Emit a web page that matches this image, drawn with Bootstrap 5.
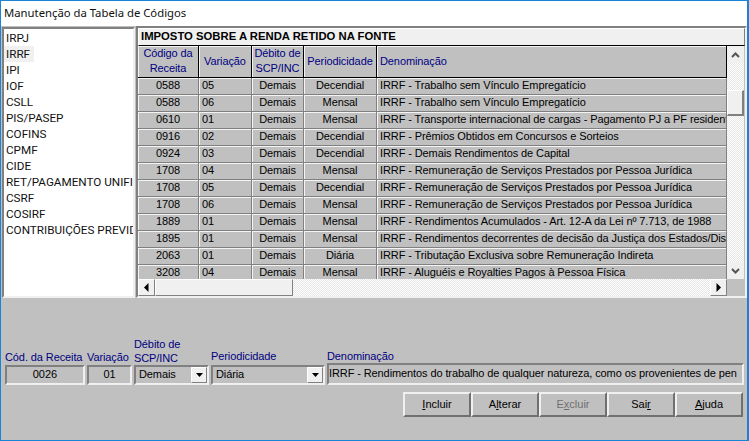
<!DOCTYPE html>
<html lang="pt">
<head>
<meta charset="utf-8">
<title>Manutenção da Tabela de Códigos</title>
<link href="https://cdn.jsdelivr.net/npm/bootstrap@5.3.0/dist/css/bootstrap.min.css" rel="stylesheet">
<style>
html,body{margin:0;height:441px;overflow:hidden;background:#c0c0c0}
body{font-family:"Liberation Sans",Arial,sans-serif;font-size:11px;color:#000;letter-spacing:-.1px}
.win{width:749px;height:441px;border:1px solid #1883d7;border-right-width:2px;background:#c0c0c0;box-sizing:border-box}
.win-title{height:25px;background:#fff;padding:4px 0 0 3px;font-family:"Noto Sans",sans-serif;font-size:11.3px;line-height:16px;color:#111;letter-spacing:0}
.main-area{height:272px;padding-left:1px;background:#c0c0c0}
.code-list{width:133px;flex:none;border:2px solid;border-color:#808080 #f0f0f0 #f0f0f0 #808080;background:#fff;overflow:hidden;padding-top:1px;margin-top:1px}
.code-item{height:16px;line-height:16px;padding-left:2px;font-family:Roboto,sans-serif;font-size:11.7px;letter-spacing:0;white-space:nowrap;color:#111;width:30px;overflow:visible}
.code-item.sel{background:#f0f0f0}
.grid-panel{width:611px;flex:none;margin-left:1px;border:2px solid;border-color:#808080 #f0f0f0 #f0f0f0 #808080;display:flex;flex-direction:column}
.grid-cap{height:18px;background:#f0f0f0;border:1px solid;border-color:#fff #808080 #000 #fff;font-weight:700;font-size:11.3px;letter-spacing:0;line-height:15px;padding-left:2px;flex:none}
.grid-mid{flex:1;display:flex;min-height:0}
.grid-tbl{table-layout:fixed;width:589px;border-collapse:separate;border-spacing:0;margin:0}
.grid-tbl>*>*>*{padding:0 2px 1px 3px;background:#c0c0c0;color:#000;border:0;border-right:1px solid #808080;border-bottom:1px solid #808080;box-shadow:inset 1px 1px 0 #f4f4f4;height:17px;line-height:15px;font-size:11px;white-space:nowrap;overflow:hidden;vertical-align:top}
.grid-tbl thead th{height:31px;font-weight:400;color:#000080;text-align:center;white-space:normal;border-right:1px solid #000;border-bottom:1px solid #000;line-height:15px;padding:0 1px 1px 1px;vertical-align:middle}
.grid-tbl thead th.lft{text-align:left;padding-left:3px}
.grid-tbl td.ctr{text-align:center;padding-left:2px}
.vbar{width:17px;flex:none;background:conic-gradient(#fff 25%,#e6e6e6 0 50%,#fff 0 75%,#e6e6e6 0) 0 0/2px 2px;display:flex;flex-direction:column}
.v-arrow{height:17px;flex:none;background:#f0f0f0;display:flex;align-items:center;justify-content:center}
.v-thumb{height:26px;margin-top:27px;flex:none;background:#f0f0f0;border:1px solid;border-color:#fff #808080 #808080 #fff;border-width:1px 2px 2px 1px}
.hbar-row{height:17px;flex:none;display:flex}
.hbar{width:589px;display:flex;background:conic-gradient(#fff 25%,#e6e6e6 0 50%,#fff 0 75%,#e6e6e6 0) 0 0/2px 2px}
.h-btn{width:17px;flex:none;background:#f0f0f0;border:1px solid;border-color:#fff #808080 #808080 #fff;display:flex;align-items:center;justify-content:center}
.h-thumb{width:138px;flex:none;background:#f0f0f0;border:1px solid;border-color:#fff #808080 #808080 #fff}
.h-gap{flex:1}
.corner{width:17px;background:#c0c0c0}
.edit-row{padding:38px 0 0 4px;height:87px}
.fld{flex:none}
.fld-label{color:#000080;font-size:11px;line-height:14px;display:block;white-space:nowrap;padding-bottom:1px}
.fld-label.up2{padding-bottom:2px}
.fld-label.nogap{padding-bottom:0}
.sunk{height:20px;margin:0;padding:0 3px 2px;border:2px solid;border-radius:0;border-color:#808080 #f0f0f0 #f0f0f0 #808080;background:#c0c0c0;font-size:11px;line-height:16px;color:#000;box-shadow:none;display:flex;align-items:center;white-space:nowrap;overflow:hidden}
.sunk:focus{background:#c0c0c0;border-color:#808080 #f0f0f0 #f0f0f0 #808080;box-shadow:none}
input.sunk.ctr{text-align:center;display:block;width:100%}
.den-box{height:22px;padding-left:0;padding-right:0}
.drop-btn{margin:0 -3px -2px auto;width:16px;height:16px;flex:none;background:#f0f0f0;border:1px solid;border-color:#fff #808080 #808080 #fff;display:flex;align-items:center;justify-content:center}
.act-row{padding:7px 0 0 402px}
.act-btn{width:68px;height:25px;padding:0;border:2px solid;border-radius:0;border-color:#f0f0f0 #707070 #707070 #f0f0f0;background:#c0c0c0;color:#000;font-size:11px;line-height:19px;letter-spacing:0}
.act-btn:disabled{color:#6f6f6f;background:#c0c0c0;border-color:#f0f0f0 #707070 #707070 #f0f0f0;opacity:1}
.act-btn u{text-underline-offset:1px}
.w-cod{width:80px}.w-var{width:45px;margin-left:2px}.w-deb{width:75px;margin-left:2px}.w-per{width:114px;margin-left:2px}.w-den{width:417px;margin-left:2px}
.c1{width:61px}.c2{width:53px}.c3{width:52px}.c4{width:73px}
</style>
</head>
<body>
<div class="win">
  <div class="win-title">Manutenção da Tabela de Códigos</div>
  <div class="main-area d-flex">
    <div class="code-list">
      <div class="code-item">IRPJ</div>
      <div class="code-item sel">IRRF</div>
      <div class="code-item">IPI</div>
      <div class="code-item">IOF</div>
      <div class="code-item">CSLL</div>
      <div class="code-item">PIS/PASEP</div>
      <div class="code-item">COFINS</div>
      <div class="code-item">CPMF</div>
      <div class="code-item">CIDE</div>
      <div class="code-item">RET/PAGAMENTO UNIFI</div>
      <div class="code-item">CSRF</div>
      <div class="code-item">COSIRF</div>
      <div class="code-item">CONTRIBUIÇÕES PREVID</div>
    </div>
    <div class="grid-panel">
      <div class="grid-cap">IMPOSTO SOBRE A RENDA RETIDO NA FONTE</div>
      <div class="grid-mid">
        <table class="grid-tbl">
          <colgroup><col class="c1"><col class="c2"><col class="c3"><col class="c4"><col></colgroup>
          <thead><tr><th>Código da Receita</th><th>Variação</th><th>Débito de SCP/INC</th><th>Periodicidade</th><th class="lft">Denominação</th></tr></thead>
          <tbody>
            <tr><td class="ctr">0588</td><td>05</td><td class="ctr">Demais</td><td class="ctr">Decendial</td><td>IRRF - Trabalho sem Vínculo Empregatício</td></tr>
            <tr><td class="ctr">0588</td><td>06</td><td class="ctr">Demais</td><td class="ctr">Mensal</td><td>IRRF - Trabalho sem Vínculo Empregatício</td></tr>
            <tr><td class="ctr">0610</td><td>01</td><td class="ctr">Demais</td><td class="ctr">Mensal</td><td>IRRF - Transporte internacional de cargas - Pagamento PJ a PF residente</td></tr>
            <tr><td class="ctr">0916</td><td>02</td><td class="ctr">Demais</td><td class="ctr">Decendial</td><td>IRRF - Prêmios Obtidos em Concursos e Sorteios</td></tr>
            <tr><td class="ctr">0924</td><td>03</td><td class="ctr">Demais</td><td class="ctr">Decendial</td><td>IRRF - Demais Rendimentos de Capital</td></tr>
            <tr><td class="ctr">1708</td><td>04</td><td class="ctr">Demais</td><td class="ctr">Mensal</td><td>IRRF - Remuneração de Serviços Prestados por Pessoa Jurídica</td></tr>
            <tr><td class="ctr">1708</td><td>05</td><td class="ctr">Demais</td><td class="ctr">Decendial</td><td>IRRF - Remuneração de Serviços Prestados por Pessoa Jurídica</td></tr>
            <tr><td class="ctr">1708</td><td>06</td><td class="ctr">Demais</td><td class="ctr">Mensal</td><td>IRRF - Remuneração de Serviços Prestados por Pessoa Jurídica</td></tr>
            <tr><td class="ctr">1889</td><td>01</td><td class="ctr">Demais</td><td class="ctr">Mensal</td><td>IRRF - Rendimentos Acumulados - Art. 12-A da Lei nº 7.713, de 1988</td></tr>
            <tr><td class="ctr">1895</td><td>01</td><td class="ctr">Demais</td><td class="ctr">Mensal</td><td>IRRF - Rendimentos decorrentes de decisão da Justiça dos Estados/Dis</td></tr>
            <tr><td class="ctr">2063</td><td>01</td><td class="ctr">Demais</td><td class="ctr">Diária</td><td>IRRF - Tributação Exclusiva sobre Remuneração Indireta</td></tr>
            <tr><td class="ctr">3208</td><td>04</td><td class="ctr">Demais</td><td class="ctr">Mensal</td><td>IRRF - Aluguéis e Royalties Pagos à Pessoa Física</td></tr>
          </tbody>
        </table>
        <div class="vbar">
          <div class="v-arrow"><svg width="9" height="6" viewBox="0 0 9 6"><path d="M1 5 L4.5 1.5 L8 5" fill="none" stroke="#555" stroke-width="2"/></svg></div>
          <div class="v-thumb"></div>
          <div class="flex-grow-1"></div>
          <div class="v-arrow"><svg width="9" height="6" viewBox="0 0 9 6"><path d="M1 1 L4.5 4.5 L8 1" fill="none" stroke="#555" stroke-width="2"/></svg></div>
        </div>
      </div>
      <div class="hbar-row">
        <div class="hbar">
          <div class="h-btn"><svg width="5" height="9" viewBox="0 0 5 9"><path d="M4.5 0 V9 L0 4.5Z" fill="#000"/></svg></div>
          <div class="h-thumb"></div>
          <div class="h-gap"></div>
          <div class="h-btn"><svg width="5" height="9" viewBox="0 0 5 9"><path d="M.5 0 V9 L5 4.5Z" fill="#000"/></svg></div>
        </div>
        <div class="corner"></div>
      </div>
    </div>
  </div>
  <div class="edit-row d-flex align-items-end">
    <div class="fld w-cod"><label class="fld-label">Cód. da Receita</label><input class="sunk ctr form-control" value="0026" readonly></div>
    <div class="fld w-var"><label class="fld-label">Variação</label><input class="sunk ctr form-control" value="01" readonly></div>
    <div class="fld w-deb"><label class="fld-label nogap">Débito de<br>SCP/INC</label><div class="sunk">Demais<span class="drop-btn"><svg width="7" height="4" viewBox="0 0 7 4"><path d="M0 0H7L3.5 4Z"/></svg></span></div></div>
    <div class="fld w-per"><label class="fld-label up2">Periodicidade</label><div class="sunk">Diária<span class="drop-btn"><svg width="7" height="4" viewBox="0 0 7 4"><path d="M0 0H7L3.5 4Z"/></svg></span></div></div>
    <div class="fld w-den"><label class="fld-label nogap">Denominação</label><div class="sunk den-box">IRRF - Rendimentos do trabalho de qualquer natureza, como os provenientes de pen</div></div>
  </div>
  <div class="act-row d-flex">
    <button class="btn act-btn"><u>I</u>ncluir</button>
    <button class="btn act-btn">A<u>l</u>terar</button>
    <button class="btn act-btn" disabled>E<u>x</u>cluir</button>
    <button class="btn act-btn">Sai<u>r</u></button>
    <button class="btn act-btn"><u>A</u>juda</button>
  </div>
</div>
<script src="https://cdn.jsdelivr.net/npm/bootstrap@5.3.0/dist/js/bootstrap.bundle.min.js"></script>
</body>
</html>
